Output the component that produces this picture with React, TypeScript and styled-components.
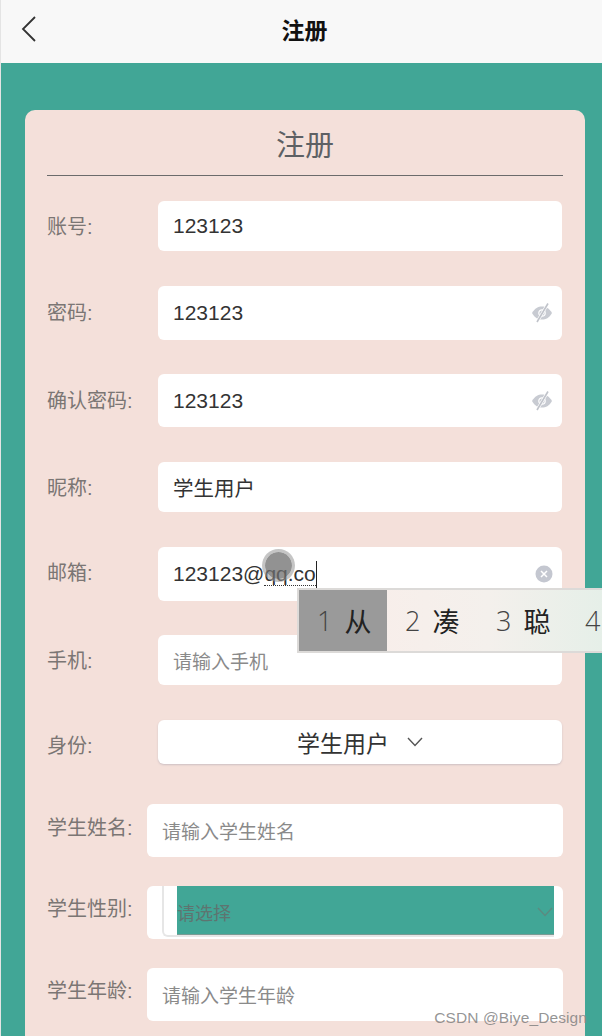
import React from "react";
import styled, { createGlobalStyle } from "styled-components";

const GlobalStyle = createGlobalStyle`
  html, body {
    margin: 0;
    padding: 0;
    background: #41a696;
  }
  * {
    box-sizing: border-box;
  }
`;

const BackIcon = () => (
  <svg width="18" height="28" viewBox="0 0 18 28" fill="none">
    <path d="M16 2 L4 14 L16 26" stroke="#333" strokeWidth="1.8" />
  </svg>
);

const EyeOffIcon = () => (
  <svg width="22" height="22" viewBox="0 0 22 22">
    <path d="M1 11 C4 6 7 4.5 11 4.5 C15 4.5 18 6 21 11 C18 16 15 17.5 11 17.5 C7 17.5 4 16 1 11 Z" fill="#c8cbd2" />
    <circle cx="11" cy="11" r="3.2" fill="none" stroke="#fff" strokeWidth="1.2" />
    <path d="M17 1.5 L6 20" stroke="#fff" strokeWidth="3" />
    <path d="M17 1.5 L6 20" stroke="#c0c3ca" strokeWidth="1.6" />
  </svg>
);

const ClearIcon = () => (
  <svg width="18" height="18" viewBox="0 0 18 18">
    <circle cx="9" cy="9" r="8.5" fill="#c4c7d0" />
    <path d="M6 6 L12 12 M12 6 L6 12" stroke="#fff" strokeWidth="1.5" />
  </svg>
);

const ChevronIcon: React.FC<{ color: string }> = ({ color }) => (
  <svg width="16" height="10" viewBox="0 0 16 10" fill="none">
    <path d="M1 1 L8 8.5 L15 1" stroke={color} strokeWidth="1.4" />
  </svg>
);

const App: React.FC = () => {
  return (
    <Page>
      <GlobalStyle />
      <NavBar>
        <BackButton>
          <BackIcon />
        </BackButton>
        <NavTitle>注册</NavTitle>
      </NavBar>
      <Content>
        <Card>
          <CardTitle>注册</CardTitle>
          <Row $top={25} $height={50}>
            <Label $shift={-1}>账号:</Label>
            <Field>
              <Value>123123</Value>
            </Field>
          </Row>
          <Row $top={35} $height={54}>
            <Label $shift={-3}>密码:</Label>
            <Field>
              <Value>123123</Value>
              <FieldIcon>
                <EyeOffIcon />
              </FieldIcon>
            </Field>
          </Row>
          <Row $top={34} $height={53}>
            <Label $shift={-2}>确认密码:</Label>
            <Field>
              <Value>123123</Value>
              <FieldIcon>
                <EyeOffIcon />
              </FieldIcon>
            </Field>
          </Row>
          <Row $top={35} $height={50}>
            <Label $shift={-2}>昵称:</Label>
            <Field>
              <SmallValue>学生用户</SmallValue>
            </Field>
          </Row>
          <Row $top={35} $height={54}>
            <Label $shift={-5}>邮箱:</Label>
            <Field>
              <Value>
                123123@
                <Composing>qq.co</Composing>
              </Value>
              <Caret />
              <FieldIcon>
                <ClearIcon />
              </FieldIcon>
              <TouchDot />
              <CandidateBar>
                <Candidate $active>
                  <CandidateNum>1</CandidateNum>从
                </Candidate>
                <Candidate>
                  <CandidateNum>2</CandidateNum>凑
                </Candidate>
                <Candidate>
                  <CandidateNum>3</CandidateNum>聪
                </Candidate>
                <LastCandidate>
                  <CandidateNum>4</CandidateNum>
                </LastCandidate>
              </CandidateBar>
            </Field>
          </Row>
          <Row $top={34} $height={50}>
            <Label $shift={-2}>手机:</Label>
            <Field>
              <Placeholder>请输入手机</Placeholder>
            </Field>
          </Row>
          <Row $top={35} $height={44}>
            <Label $shift={5}>身份:</Label>
            <SelectField>
              <SelectText>学生用户</SelectText>
              <ChevronIcon color="#555" />
            </SelectField>
          </Row>
          <Row $top={40} $height={53}>
            <WideLabel $shift={-9}>学生姓名:</WideLabel>
            <WideField>
              <Placeholder>请输入学生姓名</Placeholder>
            </WideField>
          </Row>
          <Row $top={29} $height={53}>
            <WideLabel $shift={-10}>学生性别:</WideLabel>
            <WideField $tight>
              <PickerFrame>
                <PickerFill>
                  <PickerText>请选择</PickerText>
                  <ChevronIcon color="#5c8a80" />
                </PickerFill>
              </PickerFrame>
            </WideField>
          </Row>
          <Row $top={29} $height={53}>
            <WideLabel $shift={-10}>学生年龄:</WideLabel>
            <WideField>
              <Placeholder>请输入学生年龄</Placeholder>
            </WideField>
          </Row>
        </Card>
      </Content>
      <Watermark>CSDN @Biye_Design</Watermark>
    </Page>
  );
};

const CJK = `"Liberation Sans", "Noto Sans CJK SC", sans-serif`;

const Page = styled.div`
  position: relative;
  width: 602px;
  height: 1036px;
  overflow: hidden;
  background: #41a696;
  border-left: 1px solid #e4e4e4;
  font-family: ${CJK};
`;

const NavBar = styled.header`
  position: relative;
  display: flex;
  align-items: center;
  justify-content: center;
  height: 63px;
  padding: 0 0 5px 5px;
  background: #f8f8f8;
`;

const BackButton = styled.div`
  position: absolute;
  left: 18px;
  top: 15px;
  display: flex;
`;

const NavTitle = styled.h1`
  margin: 0 0 0 1px;
  font-size: 23px;
  font-weight: 700;
  color: #111;
`;

const Content = styled.main`
  padding: 47px 17px 0 24px;
`;

const Card = styled.section`
  min-height: 960px;
  padding: 0 23px 0 22px;
  background: #f4e0da;
  border-radius: 10px;
`;

const CardTitle = styled.h2`
  display: flex;
  align-items: center;
  justify-content: center;
  height: 66px;
  margin: 0 -1px 0 0;
  border-bottom: 1px solid #6b6b6b;
  font-size: 29px;
  font-weight: 400;
  color: #5d6064;
`;

const Row = styled.div<{ $top: number; $height: number }>`
  display: flex;
  align-items: center;
  justify-content: space-between;
  height: ${(p) => p.$height}px;
  margin-top: ${(p) => p.$top}px;
`;

const Label = styled.label<{ $shift?: number }>`
  flex: none;
  margin-top: ${(p) => p.$shift ?? 0}px;
  font-size: 20px;
  color: #7b7674;
`;

const WideLabel = styled(Label)`
  width: 100px;
`;

const Field = styled.div`
  position: relative;
  display: flex;
  align-items: center;
  width: 404px;
  height: 100%;
  padding: 0 15px;
  background: #fff;
  border-radius: 6px;
`;

const WideField = styled(Field)<{ $tight?: boolean }>`
  width: 416px;
  margin-right: -1px;
  padding: ${(p) => (p.$tight ? "0 9px 2px 15px" : "0 15px")};
  align-items: ${(p) => (p.$tight ? "stretch" : "center")};
`;

const Value = styled.span`
  font-size: 21px;
  color: #333;
`;

const SmallValue = styled.span`
  font-size: 20.5px;
  color: #333;
`;

const Placeholder = styled.span`
  font-size: 19px;
  color: #8a8a8a;
`;

const Composing = styled.span`
  border-bottom: 1px dotted #333;
`;

const Caret = styled.i`
  display: block;
  width: 1px;
  height: 27px;
  background: #222;
`;

const FieldIcon = styled.span`
  position: absolute;
  right: 9px;
  top: 50%;
  display: flex;
  transform: translateY(-50%);
`;

const TouchDot = styled.span`
  position: absolute;
  left: 104px;
  top: 2px;
  width: 33px;
  height: 33px;
  border: 3px solid rgba(150, 150, 150, 0.55);
  border-radius: 50%;
  background: rgba(110, 110, 110, 0.75);
  background-clip: padding-box;
`;

const CandidateBar = styled.div`
  position: absolute;
  left: 139px;
  top: 41px;
  z-index: 2;
  display: flex;
  align-items: center;
  width: 320px;
  height: 65px;
  border: 2px solid #dcdad8;
  background: linear-gradient(90deg, #f8eeea 20%, #f4f0ec 60%, #e4efe8 100%);
  font-size: 27px;
  color: #222;
`;

const Candidate = styled.div<{ $active?: boolean }>`
  display: flex;
  flex: none;
  align-items: center;
  width: ${(p) => (p.$active ? 88 : 91)}px;
  height: 100%;
  padding-left: 18px;
  background: ${(p) => (p.$active ? "#9a9a9a" : "transparent")};
`;

const LastCandidate = styled(Candidate)`
  padding-left: 16px;
`;

const CandidateNum = styled.span`
  margin-right: 12px;
  font-family: "Open Sans", sans-serif;
  font-size: 27px;
  font-weight: 300;
  color: #444;
`;

const SelectField = styled(Field)`
  justify-content: center;
  gap: 18px;
  box-shadow: 0 1px 2px rgba(90, 100, 130, 0.25);
`;

const SelectText = styled.span`
  font-size: 23px;
  color: #333;
`;

const PickerFrame = styled.div`
  flex: 1;
  padding-left: 13px;
  background: #fff;
  border: 2px solid #e6e6e6;
  border-top: none;
  border-right: none;
  border-radius: 0 0 0 6px;
`;

const PickerFill = styled.div`
  display: flex;
  align-items: center;
  justify-content: space-between;
  height: 100%;
  padding: 4px 1px 0 0;
  background: #41a696;
  border-bottom: 1px solid #7a9a94;
`;

const PickerText = styled.span`
  font-size: 18px;
  color: #5e7470;
`;

const Watermark = styled.div`
  position: absolute;
  right: 15px;
  bottom: 9px;
  font-family: "Liberation Sans", sans-serif;
  font-size: 15.5px;
  letter-spacing: 0.1px;
  color: rgba(130, 130, 130, 0.85);
`;

export default App;
